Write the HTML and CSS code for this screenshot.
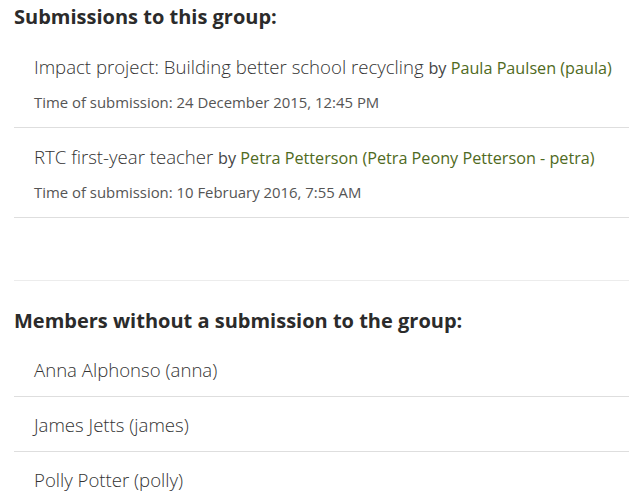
FILE: index.html
```html
<!DOCTYPE html>
<html>
<head>
<meta charset="utf-8">
<link rel="stylesheet" href="styles.css">
</head>
<body>
<div class="page">
  <h3 class="heading first">Submissions to this group:</h3>
  <div class="sub">
    <div class="sub-title">Impact project: Building better school recycling <span class="by">by <a class="user">Paula Paulsen (paula)</a></span></div>
    <div class="sub-time">Time of submission: 24 December 2015, 12:45 PM</div>
  </div>
  <div class="sub">
    <div class="sub-title">RTC first-year teacher <span class="by">by <a class="user">Petra Petterson (Petra Peony Petterson - petra)</a></span></div>
    <div class="sub-time">Time of submission: 10 February 2016, 7:55 AM</div>
  </div>
  <hr class="rule">
  <h3 class="heading second">Members without a submission to the group:</h3>
  <div class="member">Anna Alphonso (anna)</div>
  <div class="member">James Jetts (james)</div>
  <div class="member">Polly Potter (polly)</div>
</div>
</body>
</html>
```
FILE: styles.css
```css
html, body {
  margin: 0;
  padding: 0;
  background: #fff;
}
.page {
  padding-left: 14px;
  font-family: "Open Sans", "Liberation Sans", sans-serif;
  color: #333;
}
.heading {
  font-size: 20px;
  font-weight: 700;
  line-height: 24px;
  color: #2b2b2b;
}
.heading.first {
  margin: 5px 0 9px;
}
.heading.second {
  margin: 28px 0 9px;
}
.sub {
  padding: 17px 20px 15px;
  border-bottom: 1px solid #dedede;
}
.sub-title {
  font-size: 18.6px;
  font-weight: 300;
  line-height: 24px;
  color: #333;
  white-space: nowrap;
}
.by {
  font-size: 16.2px;
  font-weight: 400;
  line-height: 20px;
  color: #444;
}
.user {
  color: #4f6a22;
  text-decoration: none;
}
.sub-time {
  margin-top: 13px;
  font-size: 14.9px;
  line-height: 20px;
  color: #555;
}
.rule {
  border: 0;
  border-top: 1px solid #ececec;
  margin: 62px 0 0;
  height: 0;
}
.member {
  padding: 16px 20px 14px;
  font-size: 18.6px;
  font-weight: 300;
  line-height: 24px;
  color: #333;
  border-bottom: 1px solid #dedede;
}
```
